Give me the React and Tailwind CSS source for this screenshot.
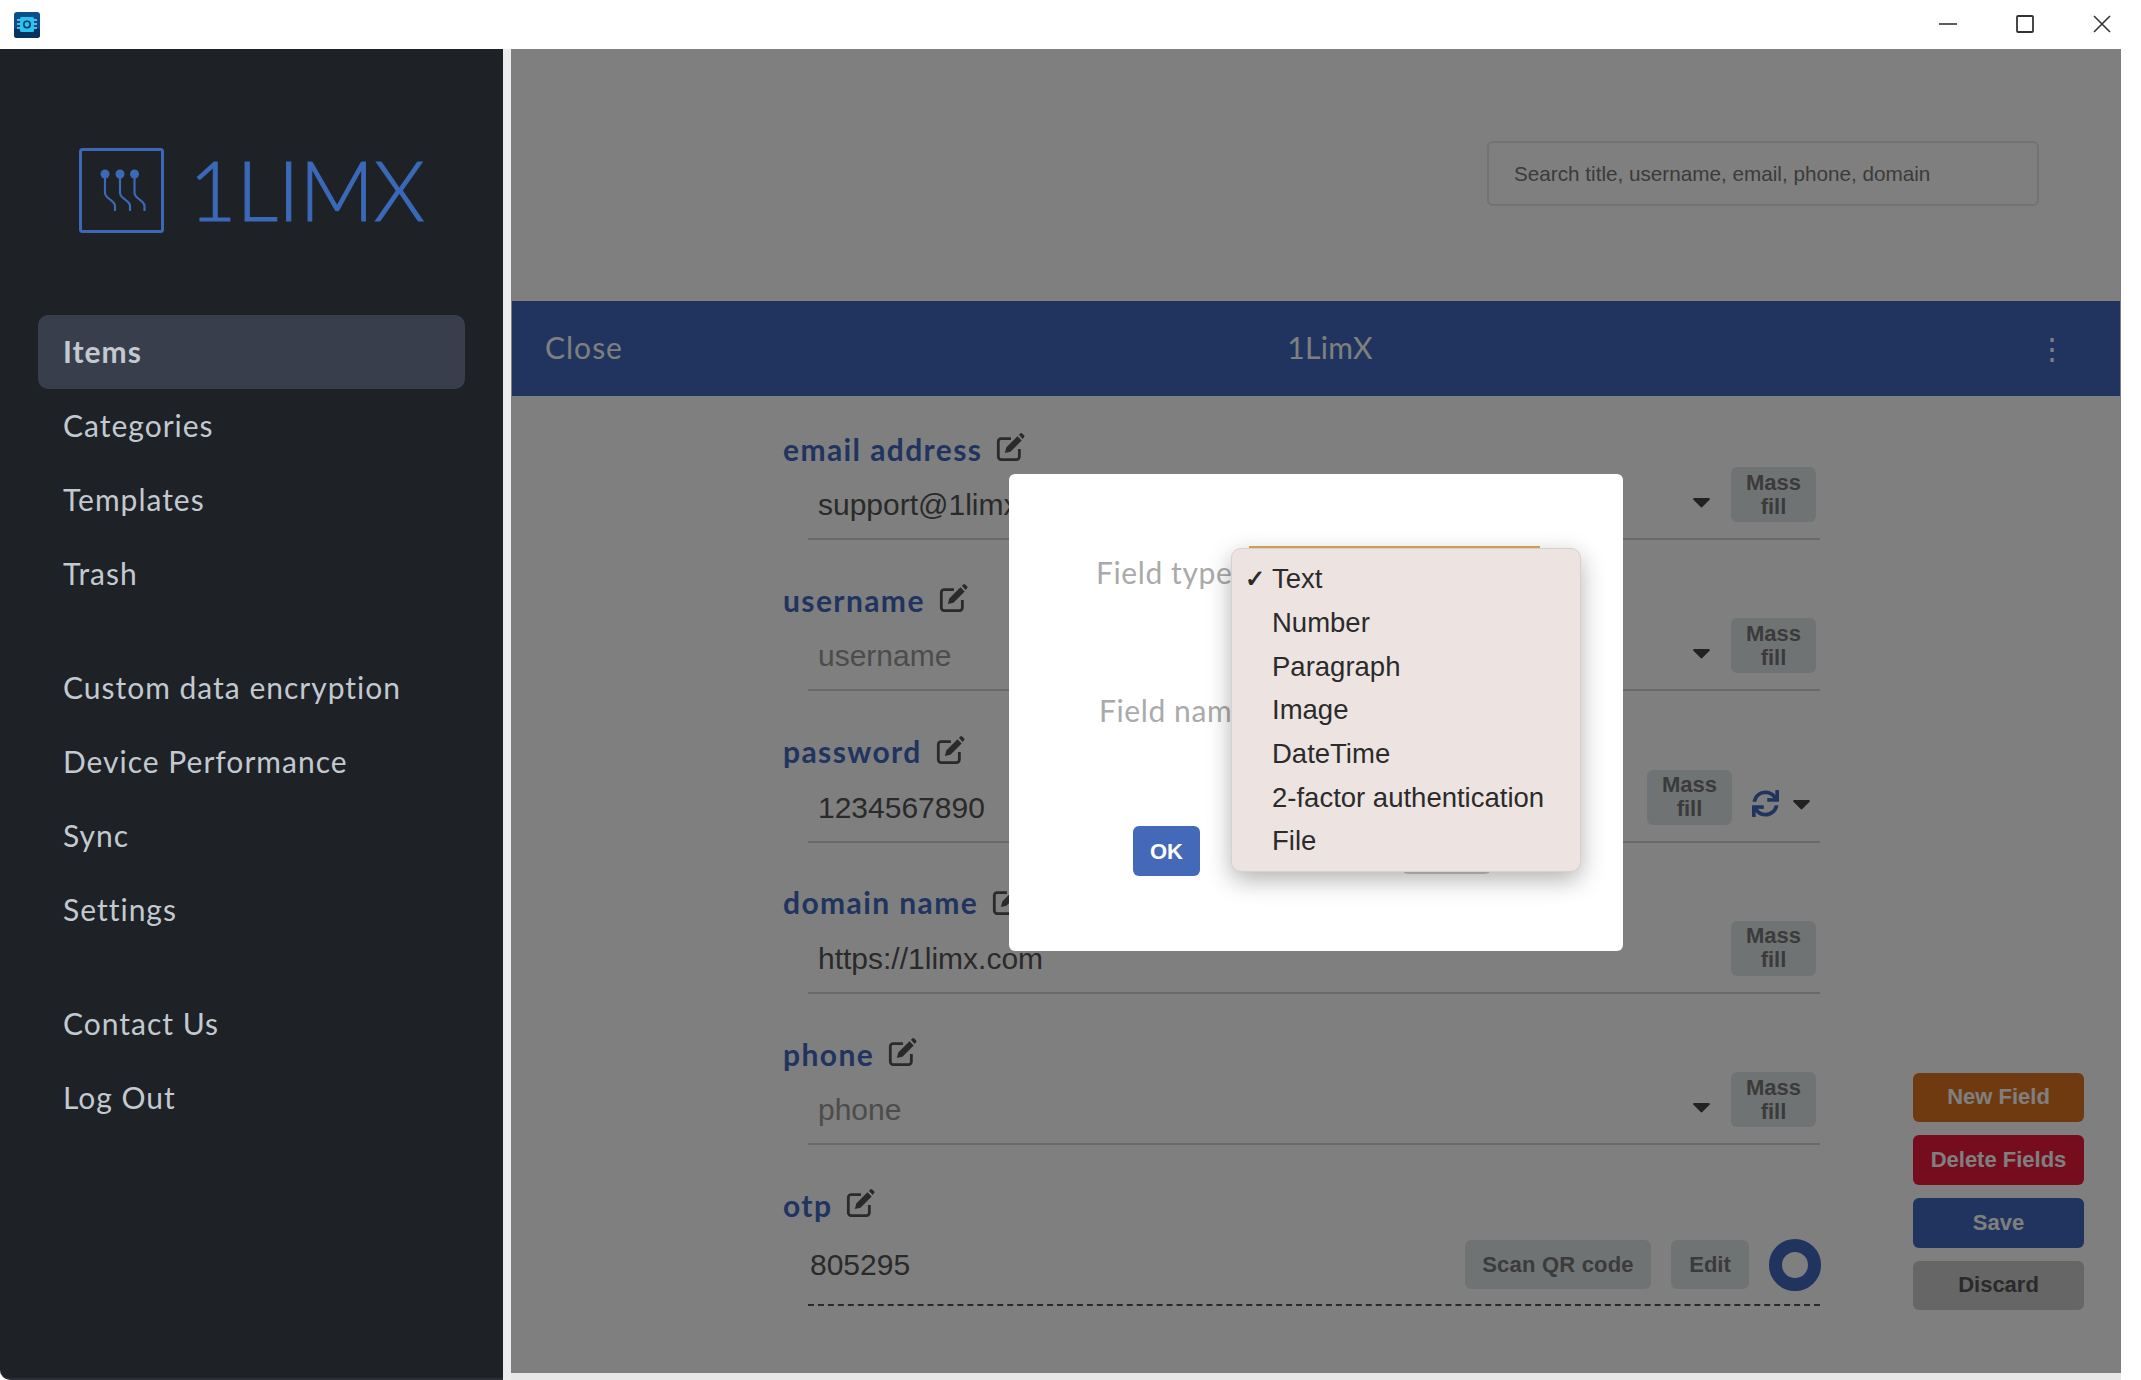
import React from 'react';
import { FaSync, FaCaretDown } from 'react-icons/fa';

const navGroups = [
  ['Items', 'Categories', 'Templates', 'Trash'],
  ['Custom data encryption', 'Device Performance', 'Sync', 'Settings'],
  ['Contact Us', 'Log Out'],
];

const fields = [
  { label: 'email address', value: 'support@1limx.com', caret: true },
  { label: 'username', placeholder: 'username', caret: true },
  { label: 'password', value: '1234567890', refresh: true },
  { label: 'domain name', value: 'https://1limx.com' },
  { label: 'phone', placeholder: 'phone', caret: true },
];

const fieldTypes = ['Text', 'Number', 'Paragraph', 'Image', 'DateTime', '2-factor authentication', 'File'];

const AppIcon = () => (
  <svg width="26" height="26" viewBox="0 0 26 26" className="ml-[14px]">
    <rect width="26" height="26" rx="3" fill="#0b4f8a" />
    <rect x="0" y="16" width="26" height="10" rx="3" fill="#08335f" />
    <path d="M3 8h3M3 12h3M3 16h3M20 8h3M20 12h3M20 16h3" stroke="#7fdcf5" strokeWidth="1.6" />
    <rect x="6" y="5" width="14" height="15" rx="1.5" fill="#27c4f2" />
    <circle cx="13" cy="12.5" r="3.2" fill="none" stroke="#0b3a66" strokeWidth="1.6" />
  </svg>
);

const WindowControls = () => (
  <div className="flex items-center -mt-[1px]">
    <svg width="18" height="18" viewBox="0 0 18 18" className="mr-[59px]">
      <path d="M0 9h18" stroke="#333" strokeWidth="1.6" />
    </svg>
    <svg width="18" height="18" viewBox="0 0 18 18" className="mr-[59px]">
      <rect x="1" y="1" width="16" height="16" rx="1" fill="none" stroke="#333" strokeWidth="1.8" />
    </svg>
    <svg width="18" height="18" viewBox="0 0 18 18" className="mr-[30px]">
      <path d="M1 1l16 16M17 1L1 17" stroke="#333" strokeWidth="1.6" />
    </svg>
  </div>
);

const Logo = () => (
  <div className="flex pl-[79px] pt-[99px] h-[266px] items-start text-[#3b69b8]">
    <svg width="85" height="85" viewBox="0 0 85 85" fill="none" stroke="#3b69b8">
      <rect x="1.5" y="1.5" width="82" height="82" rx="2" strokeWidth="3" />
      <circle cx="26" cy="26" r="4.5" fill="#3b69b8" stroke="none" />
      <circle cx="41" cy="26" r="4.5" fill="#3b69b8" stroke="none" />
      <circle cx="55.5" cy="26" r="4.5" fill="#3b69b8" stroke="none" />
      <path d="M26 28v17q0 2 2 4l6 5q2 2 2 4v5M41 28v17q0 2 2 4l6 5q2 2 2 4v5M55.5 28v17q0 2 2 4l6 5q2 2 2 4v5" strokeWidth="2.2" />
    </svg>
    <span className="ml-[25px] font-['Lato',sans-serif] font-light text-[82px] leading-[82px] [-webkit-text-stroke:1px_#3b69b8]">1LIMX</span>
  </div>
);

const Sidebar = () => (
  <aside className="w-[503px] bg-[#1e2126] rounded-bl-[10px] border-b-2 border-[#2b2f35]">
    <Logo />
    <nav className="flex flex-col gap-[40px] px-[38px] font-['Lato',sans-serif] text-[30px] tracking-[1px] text-[#c3c9d0]">
      {navGroups.map((group, i) => (
        <div key={i} className="flex flex-col">
          {group.map((item) => (
            <a
              key={item}
              className={`h-[74px] flex items-center pl-[25px] pb-[2px] rounded-[10px] ${item === 'Items' ? 'bg-[#393e4d] font-bold' : ''}`}
            >
              {item}
            </a>
          ))}
        </div>
      ))}
    </nav>
  </aside>
);

// box with a gap at the top right and a solid pen, the old font-awesome edit glyph
const EditIcon = () => (
  <svg width="30" height="29" viewBox="0 0 32 31" className="-mt-[3px] shrink-0">
    <path d="M17 6H6.500a3 3 0 0 0-3 3v16.500a3 3 0 0 0 3 3H23a3 3 0 0 0 3-3V17" fill="none" stroke="#555" strokeWidth="3" />
    <path d="M10.500 21.500l1.500-6L24 3.500l4.500 4.500-12 12zM25.500 2l1.500-1.500q1-1 2 0l2 2q1 1 0 2L29.500 6.500z" fill="#555" />
  </svg>
);

const FieldLabel = ({ label }) => (
  <div className="h-[40px] flex items-center gap-[13px]">
    <span className="font-['Lato',sans-serif] font-bold text-[30px] tracking-[1.4px] text-[#4069bf]">{label}</span>
    <EditIcon />
  </div>
);

const MassFill = () => (
  <button className="w-[85px] h-[55px] -mt-[2px] rounded-[6px] bg-[#e0e6e8] text-[#777] font-bold text-[22px] leading-[24px] text-center">
    Mass
    <br />
    fill
  </button>
);

const Field = ({ field }) => (
  <div className="h-[151.3px]">
    <FieldLabel label={field.label} />
    <div className="ml-[25px] h-[71px] border-b-2 border-[#ced4da] flex items-start pr-[4px]">
      <span className={`flex-1 pl-[10px] mt-[15px] text-[30px] leading-[42px] ${field.value ? 'text-[#555]' : 'text-[#999]'}`}>
        {field.value || field.placeholder}
      </span>
      {field.refresh && <MassFill />}
      {field.refresh && <FaSync className="ml-[20px] mt-[18px] text-[27px] text-[#4069bf]" />}
      {field.refresh && <FaCaretDown className="ml-[8px] mt-[17px] text-[29px] text-[#444]" />}
      {field.caret && <FaCaretDown className="mr-[15px] mt-[18px] text-[29px] text-[#444]" />}
      {!field.refresh && <MassFill />}
    </div>
  </div>
);

const OtpField = () => (
  <div>
    <FieldLabel label="otp" />
    <div className="ml-[25px] h-[81px] border-b-2 border-dashed border-[#555] flex items-start">
      <span className="flex-1 pl-[2px] mt-[19px] text-[30px] leading-[42px] text-[#555]">805295</span>
      <button className="w-[186px] h-[49px] mt-[15px] rounded-[6px] bg-[#e0e6e8] text-[#777] font-bold text-[22px] tracking-[0.2px]">Scan QR code</button>
      <button className="w-[78px] h-[49px] mt-[15px] ml-[20px] rounded-[6px] bg-[#e0e6e8] text-[#777] font-bold text-[22px]">Edit</button>
      <div className="w-[52px] h-[52px] mt-[14px] ml-[20px] -mr-[1px] rounded-full border-[13px] border-[#4069bf]" />
    </div>
  </div>
);

const ActionButtons = () => (
  <div className="ml-[93px] w-[171px] self-end mb-[63px] flex flex-col gap-[13px] font-bold text-[22px] text-white">
    <button className="h-[49px] pb-[2px] rounded-[6px] bg-[#de7520]">New Field</button>
    <button className="h-[50px] pb-[2px] rounded-[6px] bg-[#ec1a3e]">Delete Fields</button>
    <button className="h-[50px] pb-[2px] rounded-[6px] bg-[#4069bf]">Save</button>
    <button className="h-[49px] pb-[2px] rounded-[6px] bg-[#cccccc] text-[#555]">Discard</button>
  </div>
);

const FieldTypeMenu = () => (
  <ul className="absolute left-[222px] top-[74px] w-[350px] h-[324px] z-10 rounded-[10px] bg-[#ede4e2] border border-[#d8d0ce] shadow-[0_8px_24px_rgba(0,0,0,0.3)] pt-[8px] text-[27.500px] text-[#2b2b2b]">
    {fieldTypes.map((type) => (
      <li key={type} className="h-[43.700px] flex items-center pl-[40px] relative">
        {type === 'Text' && <span className="absolute left-[13px] text-[24px] font-bold">✓</span>}
        {type}
      </li>
    ))}
  </ul>
);

const NewFieldModal = () => (
  <div className="relative w-[614px] h-[477px] rounded-[6px] bg-white">
    <div className="pt-[73px] pl-[87px] flex items-start font-['Lato',sans-serif] text-[30px] tracking-[0.6px] text-[#aaaaaa]">
      <span className="w-[153px] h-[50px] leading-[50px]">Field type</span>
      <div className="w-[291px] h-[60px] -mt-[1px] border-t-2 border-[#dba95e]" />
    </div>
    <div className="pt-[79px] pl-[90px] font-['Lato',sans-serif] text-[30px] tracking-[0.6px] text-[#aaaaaa] h-[50px] leading-[50px] whitespace-nowrap">
      Field name
    </div>
    <div className="mt-[141px] pl-[124px] flex gap-[202px] font-bold text-[22px]">
      <button className="w-[67px] h-[50px] rounded-[6px] bg-[#4369b8] text-white">OK</button>
      <button className="w-[89px] h-[48px] rounded-[6px] bg-[#cccccc] text-[#555]">Cancel</button>
    </div>
    <FieldTypeMenu />
  </div>
);

const Main = () => (
  <main className="relative flex-1 bg-white flex flex-col border-b-[7px] border-[#e8e8e8]">
    <div className="h-[252px] flex justify-end items-start pt-[92px] pr-[82px]">
      <div className="w-[552px] h-[65px] rounded-[6px] border-2 border-[#e6e6e6] flex items-center pl-[25px] text-[20.700px] text-[#777]">
        Search title, username, email, phone, domain
      </div>
    </div>
    <div className="h-[95px] mx-[1px] bg-[#4069bf] flex items-center justify-between pl-[33px] pr-[53px] text-white">
      <span className="font-['Lato',sans-serif] text-[30px] tracking-[1px] pb-[2px]">Close</span>
      <span className="font-['Lato',sans-serif] text-[30px] tracking-[0.3px] pb-[2px]">1LimX</span>
      <span className="text-[30px] leading-none">⋮</span>
    </div>
    <div className="flex-1 flex pt-[33px]">
      <div className="ml-[272px] w-[1037px]">
        {fields.map((field) => (
          <Field key={field.label} field={field} />
        ))}
        <OtpField />
      </div>
      <ActionButtons />
    </div>
    {/* dim layer with the dialog on top */}
    <div className="absolute inset-0 pt-[3px] bg-black/50 flex items-center justify-center">
      <NewFieldModal />
    </div>
  </main>
);

export default function App() {
  return (
    <div className="w-[2141px] h-[1380px] flex flex-col bg-white overflow-hidden font-['Liberation_Sans',Arial,sans-serif]">
      <header className="h-[49px] flex items-center justify-between bg-white">
        <AppIcon />
        <WindowControls />
      </header>
      <div className="flex-1 flex min-h-0">
        <Sidebar />
        <div className="w-[8px] bg-[#ececec]" />
        <Main />
        <div className="w-[20px] bg-white" />
      </div>
    </div>
  );
}
